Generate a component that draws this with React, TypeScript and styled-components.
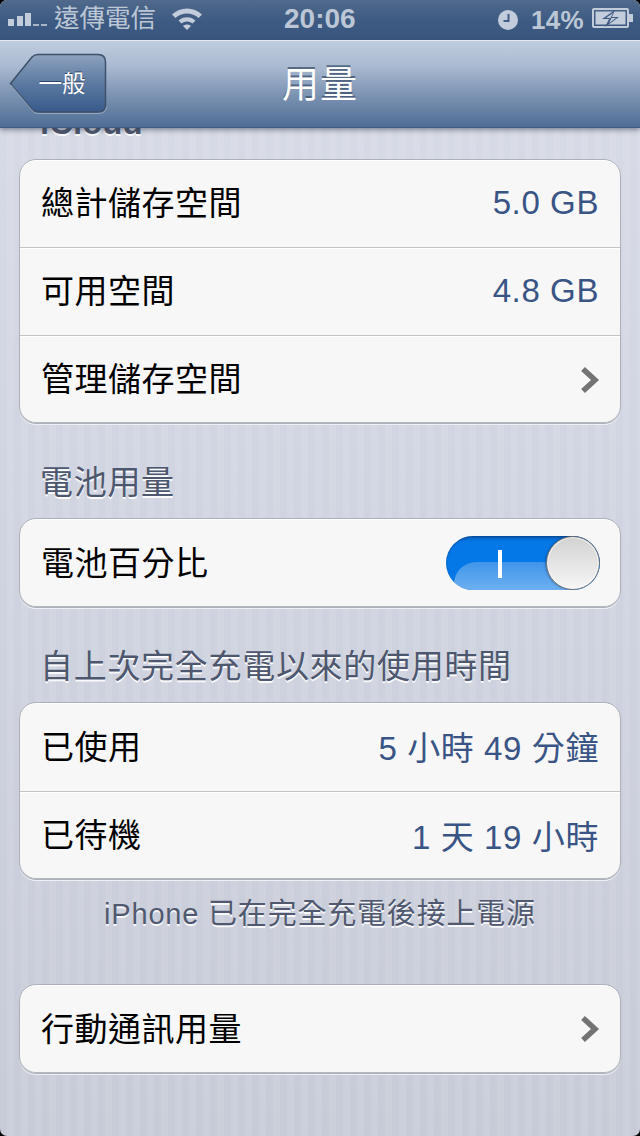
import React from "react";
import styled, { createGlobalStyle } from "styled-components";

const CJK = `"Liberation Sans", "Noto Sans CJK TC", sans-serif`;

const Global = createGlobalStyle`
  html, body { margin: 0; padding: 0; background: #000; }
  * { box-sizing: border-box; }
`;

const Screen = styled.div`
  position: relative;
  width: 640px;
  height: 1136px;
  overflow: hidden;
  display: flex;
  flex-direction: column;
  font-family: ${CJK};
  border-radius: 7px;
  background:
    repeating-linear-gradient(90deg, rgba(255,255,255,0) 0 7px, rgba(255,255,255,.09) 7px 14px),
    linear-gradient(180deg, #d8dce7 0%, #d0d4e0 45%, #c6cbd7 100%);
`;

const StatusBar = styled.div`
  height: 40px;
  flex: none;
  display: flex;
  align-items: center;
  padding: 0 6px 0 8px;
  position: relative;
  color: #bcc7d6;
  background: linear-gradient(180deg, #50698c 0%, #3d5a82 55%, #3a5680 100%);
`;

const Carrier = styled.span`
  font-size: 25.5px;
  line-height: 40px;
  margin: -4px 0 0 6px;
`;

const Wifi = styled.svg`
  margin: -4px 0 0 15px;
`;

const Time = styled.span`
  position: absolute;
  left: 284px;
  top: 0;
  font-size: 28px;
  font-weight: 700;
  line-height: 38px;
`;

const StatusRight = styled.div`
  margin-left: auto;
  display: flex;
  align-items: center;
  gap: 14px;
`;

const Percent = styled.span`
  font-size: 26px;
  font-weight: 700;
  line-height: 38px;
  margin-left: -1px;
  margin-right: -6px;
  letter-spacing: .3px;
`;

const NavBar = styled.div`
  flex: none;
  height: 88px;
  position: relative;
  z-index: 2;
  display: flex;
  align-items: center;
  justify-content: center;
  border-top: 1px solid #e6ebf2;
  border-bottom: 1px solid #3f5b82;
  box-shadow: 0 2px 5px rgba(50,60,80,.55);
  background: linear-gradient(180deg, #bfcddf 0%, #a9b9d0 30%, #7d94b3 62%, #4f6d95 100%);
`;

const Title = styled.h1`
  margin: -4px 0 0;
  font-size: 37px;
  font-weight: 400;
  color: #fff;
  letter-spacing: 1px;
  text-shadow: 0 -2px 0 rgba(60,80,110,.75);
`;

const BackButton = styled.button`
  position: absolute;
  left: 9px;
  top: 12px;
  width: 98px;
  height: 61px;
  padding: 0 0 4px 8px;
  border: 0;
  background: none;
  font-family: ${CJK};
  font-size: 23.5px;
  color: #fff;
  text-shadow: 0 -1px 0 rgba(30,50,80,.8);
  display: flex;
  align-items: center;
  justify-content: center;
`;

const BackShape = styled.svg`
  position: absolute;
  left: 0;
  top: 0;
`;

const BackLabel = styled.span`
  position: relative;
`;

const Content = styled.div`
  flex: 1;
  min-height: 0;
  overflow: hidden;
  padding: 0 19px;
`;

const Section = styled.h2<{ $top: number }>`
  margin: ${p => p.$top}px 0 0 21px;
  height: 40px;
  font-size: 33px;
  line-height: 42px;
  font-weight: 400;
  color: #4d576e;
  letter-spacing: .7px;
  white-space: nowrap;
  text-shadow: 0 2px 0 rgba(255,255,255,.9);
`;

const Clipped = styled(Section)`
  font-size: 33px;
  font-weight: 700;
  letter-spacing: 0;
  margin-bottom: 17px;
`;

const Card = styled.div<{ $gap: number }>`
  margin-top: ${p => p.$gap}px;
  background: #f7f7f7;
  border: 1px solid #acb0b9;
  border-radius: 17px;
  box-shadow: 0 1px 0 #eef0f5, inset 0 -1px 0 #b4b8c0, inset 0 1px 0 #fff;
  overflow: hidden;
`;

const Row = styled.div<{ $short?: boolean }>`
  height: ${p => (p.$short ? 87 : 88)}px;
  display: flex;
  align-items: center;
  justify-content: space-between;
  padding: 0 21px 0 21px;
  & + & {
    border-top: 1px solid #c3c3c5;
    box-shadow: inset 0 1px 0 #fff;
  }
`;

const Label = styled.span`
  margin-top: -5px;
  font-size: 33px;
  color: #000;
  letter-spacing: .5px;
`;

const Value = styled.span`
  margin-top: -2px;
  font-size: 33px;
  color: #395485;
  letter-spacing: .6px;
  white-space: pre;
`;

const Note = styled.p`
  margin: 14px 0 0;
  height: 90px;
  text-align: center;
  font-size: 29px;
  line-height: 40px;
  color: #50596f;
  letter-spacing: .8px;
  text-shadow: 0 2px 0 rgba(255,255,255,.85);
`;

const Toggle = styled.div`
  position: relative;
  width: 154px;
  height: 54px;
  margin-right: -1px;
  border-radius: 27px;
  overflow: hidden;
  background: linear-gradient(180deg, #0a5fc0 0, #0478e6 6px);
  box-shadow: inset 0 1px 2px rgba(0,40,90,.5);
`;

const ToggleGloss = styled.div`
  position: absolute;
  left: 8px;
  right: 0;
  top: 26px;
  bottom: 0;
  border-top-left-radius: 22px;
  background: linear-gradient(180deg, #3f95ea, #6db0f0);
`;

const OnMark = styled.div`
  position: absolute;
  left: 52px;
  top: 14px;
  width: 4px;
  height: 28px;
  background: #fff;
`;

const Knob = styled.div`
  position: absolute;
  right: 0;
  top: 0;
  width: 54px;
  height: 54px;
  border-radius: 50%;
  border: 1px solid #6f6f6f;
  background: linear-gradient(180deg, #d2d2d2 0%, #e6e6e6 55%, #f6f6f6 100%);
  box-shadow: inset 0 0 1px 1px rgba(255,255,255,.7), -1px 0 2px rgba(0,30,70,.35);
`;

const Chevron = () => (
  <svg width="20" height="28" viewBox="0 0 20 28" style={{ marginRight: -1 }}>
    <path d="M3 3 L15 14 L3 25" fill="none" stroke="#737373" strokeWidth="5.5" />
  </svg>
);

const Signal = () => (
  <svg width="40" height="16" viewBox="0 0 40 16" style={{ marginTop: -2 }}>
    <g fill="#c3ccda">
      <rect x="0" y="8" width="6" height="7" />
      <rect x="9" y="5" width="6" height="10" />
      <rect x="17" y="2" width="6" height="13" />
      <rect x="25" y="13" width="6" height="2" opacity=".8" />
      <rect x="33" y="13" width="6" height="2" opacity=".8" />
    </g>
  </svg>
);

const ClockIcon = () => (
  <svg width="20" height="20" viewBox="0 0 20 20" style={{ marginTop: -1 }}>
    <circle cx="10" cy="10" r="10" fill="#c3ccda" />
    <path d="M10.5 4 V11 H5.5" fill="none" stroke="#3f5b82" strokeWidth="2" />
  </svg>
);

const Battery = () => (
  <svg width="42" height="22" viewBox="0 0 42 22" style={{ marginTop: -2 }}>
    <rect x="1" y="1" width="35" height="18" fill="none" stroke="#c3ccda" strokeWidth="2" rx="1" />
    <rect x="3.5" y="3.5" width="30" height="13" fill="#c3ccda" />
    <rect x="37" y="6" width="4" height="8" fill="#c3ccda" />
    <path d="M23 2 L10 11 H17 L13 19 L27 9 H20 Z" fill="#3f5b82" />
    <path d="M21 5 L14 10 H19.5 L17 15 L24 10 H18.5 Z" fill="#c3ccda" />
  </svg>
);

export default function App() {
  return (
    <Screen>
      <Global />
      <StatusBar>
        <Signal />
        <Carrier>遠傳電信</Carrier>
        <Wifi width="32" height="24" viewBox="0 0 32 24">
          <path d="M1 8.5 C9 0.5 23 0.5 31 8.5 L27.5 12 C21.5 6 10.5 6 4.5 12 Z" fill="#c3ccda" />
          <path d="M7.5 14.5 C12 10 20 10 24.5 14.5 L21.5 17.5 C18.5 14.8 13.5 14.8 10.5 17.5 Z" fill="#c3ccda" />
          <path d="M16 24 L12 20 C14 18 18 18 20 20 Z" fill="#c3ccda" />
        </Wifi>
        <Time>20:06</Time>
        <StatusRight>
          <ClockIcon />
          <Percent>14%</Percent>
          <Battery />
        </StatusRight>
      </StatusBar>
      <NavBar>
        <BackButton>
          <BackShape width="98" height="61" viewBox="0 0 98 61">
            <defs>
              <linearGradient id="back" x1="0" y1="0" x2="0" y2="1">
                <stop offset="0" stopColor="#8da2bf" />
                <stop offset=".5" stopColor="#5c7aa1" />
                <stop offset="1" stopColor="#385a8b" />
              </linearGradient>
            </defs>
            <path
              d="M1.5 30.5 L23 4 Q25.5 1.5 29 1.5 H89 Q96.5 1.5 96.5 9 V52 Q96.5 59 89 59 H29 Q25.5 59 23 56.5 Z"
              fill="url(#back)"
              stroke="#3f5069"
              strokeWidth="1.5"
            />
            <path d="M2 32 L23.5 58 Q25.5 60.5 29 60.5 H89 Q97 60.5 97.5 54" fill="none" stroke="#a9bad0" strokeWidth="1" opacity=".7" />
          </BackShape>
          <BackLabel>一般</BackLabel>
        </BackButton>
        <Title>用量</Title>
      </NavBar>
      <Content>
        <Clipped $top={-26}>iCloud</Clipped>
        <Card $gap={0}>
          <Row $short><Label>總計儲存空間</Label><Value>5.0 GB</Value></Row>
          <Row><Label>可用空間</Label><Value>4.8 GB</Value></Row>
          <Row><Label>管理儲存空間</Label><Chevron /></Row>
        </Card>
        <Section $top={38}>電池用量</Section>
        <Card $gap={16}>
          <Row>
            <Label>電池百分比</Label>
            <Toggle>
              <ToggleGloss />
              <OnMark />
              <Knob />
            </Toggle>
          </Row>
        </Card>
        <Section $top={38}>自上次完全充電以來的使用時間</Section>
        <Card $gap={16}>
          <Row><Label>已使用</Label><Value>5 小時 49 分鐘</Value></Row>
          <Row><Label>已待機</Label><Value>1 天 19 小時</Value></Row>
        </Card>
        <Note>iPhone 已在完全充電後接上電源</Note>
        <Card $gap={0}>
          <Row><Label>行動通訊用量</Label><Chevron /></Row>
        </Card>
      </Content>
    </Screen>
  );
}
